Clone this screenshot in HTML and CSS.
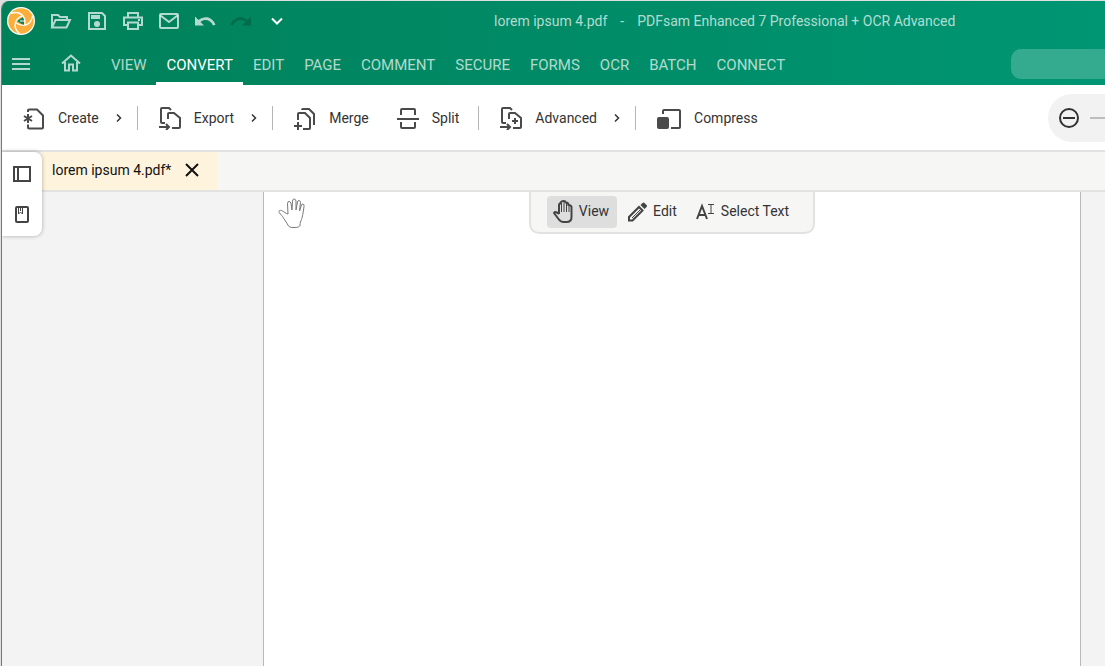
FILE: index.html
```html
<!DOCTYPE html>
<html lang="en">
<head>
  <meta charset="UTF-8" />
  <title>lorem ipsum 4.pdf - PDFsam Enhanced 7</title>
  <link rel="stylesheet" href="styles.css">
</head>
<body>
  <div class="window">
    <header class="header">
      <div class="title-bar">
        <svg class="logo" viewBox="0 0 28 28">
          <circle cx="14" cy="14" r="14" fill="#fff" />
          <circle cx="14" cy="14" r="12.7" fill="#fbae3c" />
          <path d="M10 14l7-4.500v9z" fill="#07835d" />
          <g fill="none" stroke="#fff" stroke-width="1.3">
            <path d="M4 6.500C12 3.500 19 8 18 18" />
            <path d="M4 6.500C12 3.500 19 8 18 18" transform="rotate(120 14 14)" />
            <path d="M4 6.500C12 3.500 19 8 18 18" transform="rotate(240 14 14)" />
          </g>
          <path d="M13 14h5" stroke="#fff" stroke-width="1" />
        </svg>
        <div class="quick-tools">
          <button aria-label="Open">
            <svg width="22" height="20" viewBox="0 0 22 20"><path d="M2 16V4h6l2 2h7v3M2 16.500L5.500 9H20l-3.500 7.500z" /></svg>
          </button>
          <button aria-label="Save">
            <svg width="20" height="20" viewBox="0 0 20 20"><path d="M2 2h13l3 3v13H2z" /><path class="fill" d="M4 4h9v4H4z" /><circle class="fill" cx="10" cy="13" r="3" /></svg>
          </button>
          <button aria-label="Print">
            <svg width="22" height="20" viewBox="0 0 22 20"><path d="M6 6V2h10v4M6 14H2V6.500h18V14h-4M6 11.500h10V18H6z" /><path class="fill" d="M16 8h2v2h-2z" /></svg>
          </button>
          <button aria-label="Mail">
            <svg width="22" height="20" viewBox="0 0 22 20"><rect x="2" y="3" width="18" height="14" rx="1" /><path d="M2.500 4.500L11 11l8.500-6.500" /></svg>
          </button>
          <button aria-label="Undo">
            <svg width="22" height="20" viewBox="0 0 22 20"><path class="fill" d="M1 5.500V14.500h9L6.500 11C11 7.500 16.500 9 19 14.500l2.500-.8C18.500 6 11 4 4.500 9z" /></svg>
          </button>
          <button aria-label="Redo" class="disabled" disabled>
            <svg width="22" height="20" viewBox="0 0 22 20"><path class="fill" d="M21 5.500V14.500h-9L15.500 11C11 7.500 5.500 9 3 14.500l-2.500-.8C3.500 6 11 4 17.500 9z" /></svg>
          </button>
          <button aria-label="Customize" class="bright">
            <svg width="14" height="20" viewBox="0 0 14 20"><path d="M2 7.500l5 5 5-5" /></svg>
          </button>
        </div>
        <div class="title">
          <span>lorem ipsum 4.pdf</span>
          <span>-</span>
          <span>PDFsam Enhanced 7 Professional + OCR Advanced</span>
        </div>
      </div>

      <div class="menu-bar">
        <button class="menu-btn" aria-label="Menu">
          <svg width="20" height="18" viewBox="0 0 20 18"><path d="M1 4h18M1 9h18M1 14h18" /></svg>
        </button>
        <button class="home-btn" aria-label="Home">
          <svg width="20" height="20" viewBox="0 0 20 20"><path d="M1 10.500L10 2.500l9 8M4 9v8.500h4v-6h4v6h4V9" /></svg>
        </button>
        <nav class="tabs">
          <a href="#">VIEW</a>
          <a href="#" class="active">CONVERT</a>
          <a href="#">EDIT</a>
          <a href="#">PAGE</a>
          <a href="#">COMMENT</a>
          <a href="#">SECURE</a>
          <a href="#">FORMS</a>
          <a href="#">OCR</a>
          <a href="#">BATCH</a>
          <a href="#">CONNECT</a>
        </nav>
        <input type="search" class="search" aria-label="Search" />
      </div>
    </header>

    <div class="toolbar">
      <button class="tool menu">
        <svg class="icon" viewBox="0 0 22 24"><path d="M5 6V4.500q0-1 1-1h8l6 6v12q0 1-1 1H6q-1 0-1-1v-3M5 8v9M1 10l8 5M1 15l8-5" /></svg>
        <span>Create</span>
        <svg class="chevron" viewBox="0 0 8 12"><path d="M2 2.500L5.500 6 2 9.500" /></svg>
      </button>
      <span class="divider"></span>
      <button class="tool menu">
        <svg class="icon" viewBox="0 0 22 24"><path d="M6 17H3q-1 0-1-1V3q0-1 1-1h7l2 2M9 13V8q0-1 1-1h5l6 5v9q0 1-1 1h-7M0 21h10M7 18l3 3-3 3" /></svg>
        <span>Export</span>
        <svg class="chevron" viewBox="0 0 8 12"><path d="M2 2.500L5.500 6 2 9.500" /></svg>
      </button>
      <span class="divider"></span>
      <button class="tool">
        <svg class="icon" viewBox="0 0 22 24"><path d="M8 4q0-1 1-1h6l5 5v11M4 14V8q0-1 1-1h6l5 5v10q0 1-1 1H9M0 20h8M4 16v8" /></svg>
        <span>Merge</span>
      </button>
      <button class="tool">
        <svg class="icon" viewBox="0 0 22 24"><path d="M4 9V4q0-1 1-1h12q1 0 1 1v5M0 13h22M4 16v5q0 1 1 1h12q1 0 1-1v-5" /></svg>
        <span>Split</span>
      </button>
      <span class="divider"></span>
      <button class="tool menu">
        <svg class="icon" viewBox="0 0 22 24"><path d="M6 17H3q-1 0-1-1V3q0-1 1-1h7l2 2M9 13V8q0-1 1-1h5l6 5v9q0 1-1 1h-7M0 21h10M7 18l3 3-3 3M12 15h6M15 12v6" /></svg>
        <span>Advanced</span>
        <svg class="chevron" viewBox="0 0 8 12"><path d="M2 2.500L5.500 6 2 9.500" /></svg>
      </button>
      <span class="divider"></span>
      <button class="tool">
        <svg class="icon" viewBox="0 0 24 24"><path d="M6 8V5q0-1 1-1h15q1 0 1 1v16q0 1-1 1h-8" /><rect class="solid" x="0" y="11" width="12" height="12" rx="2" /></svg>
        <span>Compress</span>
      </button>

      <div class="zoom">
        <button aria-label="Zoom out">
          <svg width="22" height="22" viewBox="0 0 22 22"><circle cx="11" cy="11" r="9" /><path d="M5 11h12" /></svg>
        </button>
        <input type="range" class="zoom-range" aria-label="Zoom" min="0" max="100" value="50" />
      </div>
    </div>

    <div class="doc-tabs">
      <div class="doc-tab">
        <span>lorem ipsum 4.pdf*</span>
        <button aria-label="Close document">
          <svg width="16" height="16" viewBox="0 0 16 16"><path d="M2 2l12 12M14 2L2 14" /></svg>
        </button>
      </div>
      <aside class="side-panel">
        <button aria-label="Pages">
          <svg width="18" height="16" viewBox="0 0 18 16"><path d="M1 1h16v14H1zM5 1v14" /></svg>
        </button>
        <button aria-label="Bookmarks">
          <svg width="14" height="18" viewBox="0 0 14 18"><rect x="1" y="2" width="12" height="15" rx="1" /><path class="thin" d="M3.500 2v7l2-2 2 2V2M5.500 2v4" /></svg>
        </button>
      </aside>
    </div>

    <main class="canvas">
      <div class="page">
        <svg class="hand-cursor" viewBox="0 0 28 32"><path d="M10 17L9.500 6.500q0-2 1.500-2t2 2L14 13l.5-9q.3-2 1.700-2t1.800 2v9l1.500-8q.4-1.800 1.700-1.500t1.300 2L21.500 14l2-6q.6-1.500 1.700-1t.8 2.500c-1 7-1.500 10-2.500 13-.7 2-1.500 3-1.500 5.500 0 2-3 2.500-6 2.500s-5-.5-5.500-1.500C9 26 6 22 4.500 19.500 3.500 18 1 16 1 14.500c0-1 1-1.500 2.500-1 2.500 1 4 3 6.500 3.500z" /></svg>
        <div class="mode-bar">
          <button class="mode active">
            <svg width="20" height="24" viewBox="0 0 20 24"><path d="M6 15V6q0-1.500 1.500-1.500V3.500Q8.500 2 10.500 2t2.500 1.500q2.500 0 2.500 2.500 2.500 0 3 2V18q0 5-5 5h-3q-3 0-5-3L1 14q1-1.500 3-.5l2 1.500" /><path class="mid" d="M8.500 4v9M11 3v10M13.500 4v9M16 6v7" /></svg>
            <span>View</span>
          </button>
          <button class="mode">
            <svg width="20" height="24" viewBox="0 0 20 24"><path d="M2 21.500v-3.500L12 8l3.500 3.500-10 10z" /><path class="mid" d="M5 19l8-8" /><path class="solid" d="M13.500 6l2-2q1-1 2 0l2 2q1 1 0 2l-2 2z" /></svg>
            <span>Edit</span>
          </button>
          <button class="mode">
            <svg width="20" height="24" viewBox="0 0 20 24"><path class="letter" d="M2 20L7 7l5 13M3.500 16h7" /><path class="thin" d="M13 5.500h6M16 5.500v9M13 14.500h6" /></svg>
            <span>Select Text</span>
          </button>
        </div>
      </div>
    </main>
  </div>
</body>
</html>
```
FILE: styles.css
```css
* {
  margin: 0; padding: 0; box-sizing: border-box;
  font-family: Roboto, sans-serif;
}

body {
  background: #dfdfdf;
  color: #333;
  font-size: 14px;
  line-height: 20px;
}

button {
  background: none;
  border: none;
  color: inherit;
  font-size: 14px;
  line-height: 20px;
  display: flex;
  align-items: center;
  justify-content: center;
  cursor: pointer;
}

svg {
  display: block;
  flex: none;
  fill: none;
  stroke: currentColor;
  stroke-width: 2;
}

.fill, .solid {
  fill: currentColor;
  stroke: none;
}

.thin, .mid {
  stroke-width: 1;
}

.window {
  display: flex;
  flex-direction: column;
  height: calc(100vh - 1px);
  margin: 1px 0 0 1px;
  border-left: 1px solid #777;
  border-top-left-radius: 8px;
  overflow: hidden;
}

/* header */
.header {
  background: linear-gradient(90deg, #008059, #009673);
  color: rgba(255, 255, 255, 0.7);
}

.title-bar {
  display: flex;
  align-items: center;
  height: 39px;
  padding-left: 5px;
}

.logo {
  width: 28px;
  height: 28px;
  stroke: none;
}

.quick-tools {
  display: flex;
  margin-left: 8px;
}

.quick-tools button {
  width: 36px;
  height: 32px;
}

.quick-tools .disabled {
  color: #006c4b;
}

.quick-tools .bright {
  color: #fff;
}

.title {
  display: flex;
  gap: 13px;
  margin-left: 199px;
  white-space: nowrap;
}

.menu-bar {
  display: flex;
  height: 45px;
}

.menu-btn {
  width: 38px;
  padding-top: 2px;
}

.home-btn {
  width: 62px;
}

.tabs {
  display: flex;
  flex: 1;
  margin-left: -1px;
}

.tabs a {
  padding: 15px 10px 7px;
  border-bottom: 3px solid transparent;
  color: inherit;
  text-decoration: none;
  font-size: 15px;
}

.tabs .active {
  color: #fff;
  border-color: #fff;
}

.search {
  width: 94px;
  height: 30px;
  margin-top: 9px;
  padding: 0 10px;
  border: none;
  border-radius: 10px 0 0 10px;
  background: #34aa8e;
  color: #fff;
  outline: none;
  appearance: none;
}

/* ribbon */
.toolbar {
  display: flex;
  align-items: center;
  height: 67px;
  background: #fff;
  border-bottom: 2px solid #e2e2e1;
}

.tool {
  height: 40px;
  gap: 13px;
  padding: 0 7px 0 21px;
}

.tool.menu {
  padding-right: 2px;
}

.icon {
  height: 24px;
  color: #4a4a4a;
}

.chevron {
  width: 8px;
  height: 12px;
  margin-left: 3px;
  stroke-width: 1.5;
}

.divider {
  width: 1px;
  height: 24px;
  margin-left: 12px;
  background: #b5b5b5;
}

.zoom {
  display: flex;
  align-items: center;
  width: 57px;
  height: 48px;
  margin-left: auto;
  padding-left: 10px;
  gap: 10px;
  border-radius: 24px 0 0 24px;
  background: #f2f2f2;
  overflow: hidden;
}

.zoom-range {
  flex: none;
  width: 120px;
  height: 2px;
  background: #bdbdbd;
  appearance: none;
}

/* open documents */
.doc-tabs {
  position: relative;
  height: 40px;
  padding-left: 40px;
  background: #f6f6f4;
  border-bottom: 2px solid #e2e2e1;
}

.doc-tab {
  display: flex;
  align-items: center;
  gap: 13px;
  width: fit-content;
  height: 38px;
  padding: 0 17px 3px 10px;
  background: #fef3dc;
  color: #111;
}

.side-panel {
  position: absolute;
  left: 0;
  top: 0;
  width: 40px;
  padding: 2px 0;
  background: #fff;
  border-radius: 0 8px 8px 0;
  box-shadow: 0 0 4px rgba(0, 0, 0, 0.3);
  color: #444;
  z-index: 1;
}

.side-panel button {
  width: 40px;
  height: 40px;
}

/* document */
.canvas {
  display: flex;
  flex: 1;
  padding: 0 24px 0 261px;
  background: #f3f3f3;
}

.page {
  position: relative;
  display: flex;
  flex: 1;
  justify-content: center;
  align-items: flex-start;
  background: #fff;
  border: solid #b9b9b9;
  border-width: 0 1px;
}

.hand-cursor {
  position: absolute;
  left: 14px;
  top: 5px;
  width: 28px;
  height: 32px;
  color: #777;
  stroke-width: 1;
}

.mode-bar {
  display: flex;
  gap: 4px;
  padding: 4px 16px;
  background: #f6f6f4;
  border: 2px solid #e2e2e1;
  border-top: none;
  border-radius: 0 0 10px 10px;
}

.mode {
  height: 32px;
  gap: 6px;
  padding: 0 8px 2px 6px;
  border-radius: 4px;
}

.mode.active {
  background: #dedede;
}

.mode svg {
  color: #444;
}
```
